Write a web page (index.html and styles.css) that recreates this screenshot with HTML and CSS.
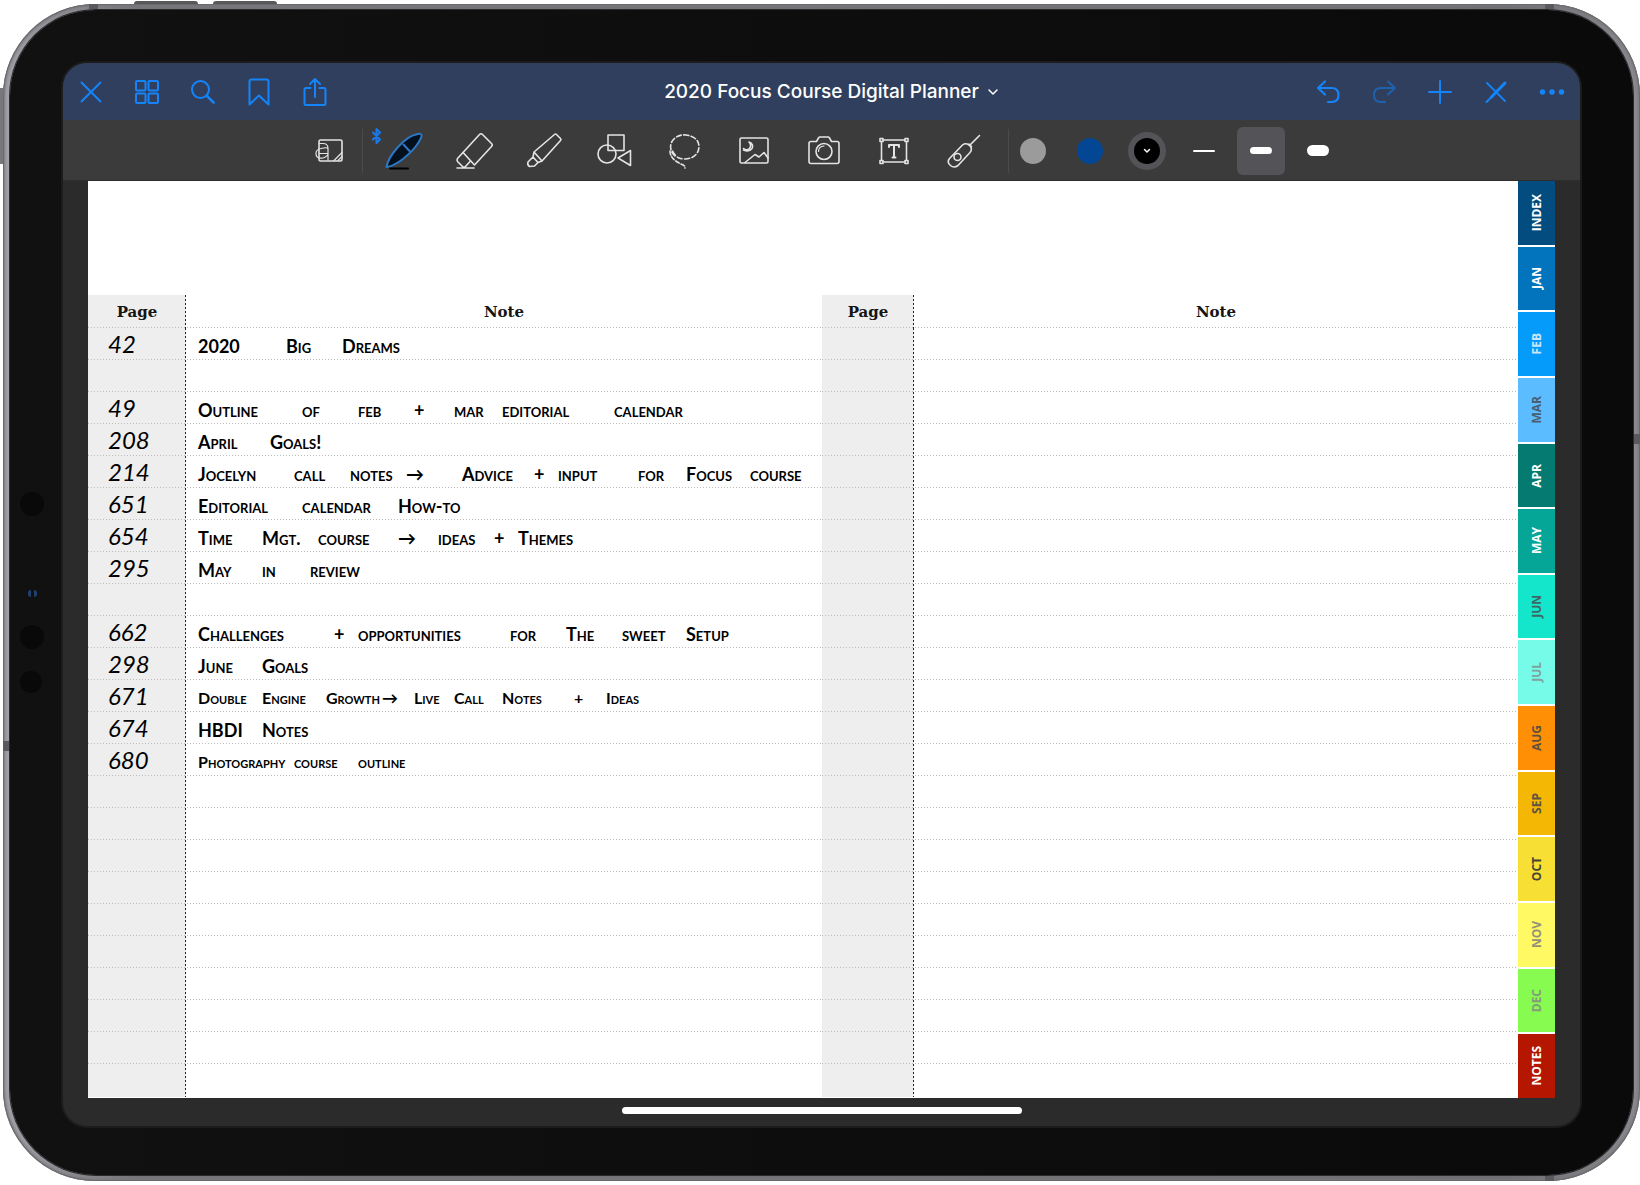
FILE: index.html
```html
<!DOCTYPE html>
<html lang="en">
<head>
<meta charset="utf-8">
<meta name="viewport" content="width=device-width, initial-scale=1">
<title>2020 Focus Course Digital Planner</title>
<link rel="stylesheet" href="styles.css">
</head>
<body>
<div class="device">
  <span class="key key-left"></span>
  <span class="key key-up"></span>
  <span class="key key-down"></span>
  <span class="band band-tl"></span>
  <span class="band band-tr"></span>
  <span class="band band-l"></span>
  <span class="band band-r"></span>
  <span class="band band-br"></span>
  <div class="bezel">
    <span class="lens lens-1"></span>
    <span class="glint"></span>
    <span class="lens lens-2"></span>
    <span class="lens lens-3"></span>
    <div class="screen">
      <header class="navbar">
        <div class="nav-group">
          <button class="nav-btn" aria-label="Close"><svg width="28" height="28" viewBox="0 0 28 28"><path d="M4.500 4.500l19 19M23.500 4.500l-19 19"/></svg></button>
          <button class="nav-btn" aria-label="Thumbnails"><svg width="28" height="28" viewBox="0 0 28 28"><rect x="3" y="3" width="9.500" height="9.500" rx="1"/><rect x="15.500" y="3" width="9.500" height="9.500" rx="1"/><rect x="3" y="15.500" width="9.500" height="9.500" rx="1"/><rect x="15.500" y="15.500" width="9.500" height="9.500" rx="1"/></svg></button>
          <button class="nav-btn" aria-label="Search"><svg width="28" height="28" viewBox="0 0 28 28"><circle cx="11.500" cy="11.500" r="8.500"/><path d="M17.700 17.700l7 7" stroke-width="2.600"/></svg></button>
          <button class="nav-btn" aria-label="Bookmark"><svg width="28" height="30" viewBox="0 0 28 30"><path d="M4.500 27.500V4.500q0-2 2-2h15q2 0 2 2v23L14 18.500z"/></svg></button>
          <button class="nav-btn" aria-label="Share"><svg width="28" height="30" viewBox="0 0 28 30"><path d="M9.500 11H5q-1.500 0-1.500 1.500v14q0 1.500 1.500 1.500h18q1.500 0 1.500-1.500v-14Q24.500 11 23 11h-4.500M14 20V2M9 7l5-5 5 5"/></svg></button>
        </div>
        <h1 class="title"><button class="title-btn">2020 Focus Course Digital Planner<svg class="chevron" width="10" height="8" viewBox="0 0 10 8"><path d="M1 2l4 4 4-4"/></svg></button></h1>
        <div class="nav-group nav-end">
          <button class="nav-btn" aria-label="Undo"><svg width="28" height="28" viewBox="0 0 28 28"><path d="M11 3.500L4 10l7 6.500M4 10h13.500q7 0 7 7t-7 7H14" stroke-width="2.200"/></svg></button>
          <button class="nav-btn dim" aria-label="Redo"><svg width="28" height="28" viewBox="0 0 28 28"><path d="M18 3.500L25 10l-7 6.500M25 10H11q-7 0-7 7t7 7h4"/></svg></button>
          <button class="nav-btn" aria-label="Add page"><svg width="28" height="28" viewBox="0 0 28 28"><path d="M14 3v22M3 14h22"/></svg></button>
          <button class="nav-btn" aria-label="Read-only mode"><svg width="28" height="28" viewBox="0 0 28 28"><path d="M5 5l18 18" stroke-width="1.800"/><path d="M23 5L9 19.500" stroke-width="3"/><path d="M7.500 21L4.500 24" stroke-width="2"/></svg></button>
          <button class="nav-btn" aria-label="More"><svg width="28" height="28" viewBox="0 0 28 28"><g class="solid"><circle cx="4.500" cy="14" r="2.700"/><circle cx="14" cy="14" r="2.700"/><circle cx="23.500" cy="14" r="2.700"/></g></svg></button>
        </div>
      </header>

      <div class="toolbar" role="toolbar" aria-label="Drawing tools">
        <button class="tool tool-zoom" aria-label="Zoom window"><svg width="30" height="24" viewBox="0 0 30 24"><rect x="5" y="1" width="23" height="21" rx="1.500"/><path d="M5.500 4.500H9q5 0 5 5V21M14 9.500Q13 8 7 9.500q-5 1-5 5T5.500 19q5 1 8.500-3.500M5.500 14.500H14M20 21.500l8-8M24 21.500l4-4" stroke-width="1.200"/></svg></button>
        <span class="rule"></span>
        <div class="tools">
          <button class="tool tool-pen" aria-label="Pen"><svg class="bluetooth" width="12" height="16" viewBox="0 0 12 16"><path d="M2 4.500l7 7-3.500 3.500V1L9 4.500l-7 7"/></svg><svg width="40" height="38" viewBox="0 0 40 38"><path class="nib" d="M2.500 35Q4 26 14 15T32 2.500q5-1.500 5.500.5.500 2-3 7.500Q30 18 19 27 9 34.500 2.500 35z"/><path class="nib" d="M19.500 12.500l6.500 7"/><path class="ink" d="M6 36.500h18"/></svg></button>
          <button class="tool" aria-label="Eraser"><svg width="40" height="38" viewBox="0 0 40 38"><path d="M9 20.500L25.500 2.500q1.500-1.500 3 0l9 9q1.500 1.500 0 3L20.500 33z"/><path d="M9 20.500l-5.500 6q-1 1.500 0 3l5 5q1.500 1.300 3 0l5-5.500M3 36h17"/></svg></button>
          <button class="tool" aria-label="Highlighter"><svg width="38" height="38" viewBox="0 0 38 38"><path d="M9 20L29.500 2.500q1-1 2 0l4 4q1 1 0 2L17 29zM9 20l-1 5 5 5.500 4-1.500M8 25l-5 5q-1 3 1.500 4.500L9.500 34l3.500-3.500"/></svg></button>
          <button class="tool" aria-label="Shapes"><svg width="38" height="38" viewBox="0 0 38 38"><rect x="13" y="3" width="16" height="15.500"/><circle cx="12" cy="22" r="9"/><path d="M35.500 18.500v15L23 26z"/></svg></button>
          <button class="tool" aria-label="Lasso"><svg width="38" height="38" viewBox="0 0 38 38"><path stroke-dasharray="5 2.500" d="M10 24Q3 17 7 9.500 12 2 21 3q13 2 13 12-1 11-14 12-6 0-9-3-4-4-3.500-7"/><path stroke-dasharray="4 2" d="M5 19q0 8 11 13 5 2 4 4"/></svg></button>
          <button class="tool" aria-label="Image"><svg width="34" height="34" viewBox="0 0 34 34"><rect x="3" y="4" width="28" height="25" rx="1.500"/><path d="M12 8q3 3 .5 6.500-3 2.500-6 0M12 8q5 2 3 6.500-3 4-8.500 1.500M8 28.500l10-8 4 2.500 5-4.500 4 5.500"/></svg></button>
          <button class="tool" aria-label="Camera"><svg width="34" height="34" viewBox="0 0 34 34"><path d="M4 7.500h5.500l2-3.500q.500-1 1.500-1h8q1 0 1.500 1l2 3.500H30q2 0 2 2v18q0 2-2 2H4q-2 0-2-2v-18q0-2 2-2z"/><circle cx="17" cy="17.500" r="8"/><path d="M11.500 17.500q0-5 5.500-5.500" stroke-width="1.200"/></svg></button>
          <button class="tool" aria-label="Text"><svg width="34" height="34" viewBox="0 0 34 34"><path d="M6 6h22M6 28h22M4.500 7.500v19M29.500 7.500v19"/><rect x="3" y="4.500" width="3" height="3"/><rect x="28" y="4.500" width="3" height="3"/><rect x="3" y="26.500" width="3" height="3"/><rect x="28" y="26.500" width="3" height="3"/><path d="M12 13v-2h10v2M17 11v12.500M15.500 23.500h3" stroke-width="2"/></svg></button>
          <button class="tool" aria-label="Laser pointer"><svg width="38" height="38" viewBox="0 0 38 38"><path d="M4.500 26.500L17.500 13q3-2.500 6.500 0l1.500 1.500q2 3-.500 6L13 33.500q-4 3-7.500 0-4-3.500-1-7zM25 13l9.500-9.500M24 12l2.500 2.500"/><circle cx="12.500" cy="25" r="3.500"/></svg></button>
        </div>
        <span class="rule"></span>
        <div class="presets">
          <button class="preset" aria-label="Grey"><span class="swatch grey"></span></button>
          <button class="preset" aria-label="Blue"><span class="swatch blue"></span></button>
          <button class="preset" aria-label="Black, selected"><span class="swatch black"><svg width="8" height="6" viewBox="0 0 8 6"><path d="M1.500 1.500L4 4l2.500-2.500"/></svg></span></button>
          <button class="preset" aria-label="Thin stroke"><span class="stroke thin"></span></button>
          <button class="preset selected" aria-label="Medium stroke"><span class="stroke medium"></span></button>
          <button class="preset" aria-label="Thick stroke"><span class="stroke thick"></span></button>
        </div>
      </div>

      <main class="paper">
        <div class="sheet">
          <table class="index left">
            <colgroup><col class="col-page"><col></colgroup>
            <thead><tr><th scope="col">Page</th><th scope="col">Note</th></tr></thead>
            <tbody>
              <tr><td>42</td><td><p><span class="u11">2020</span><span class="u7">Big</span><span>Dreams</span></p></td></tr>
              <tr><td></td><td></td></tr>
              <tr><td>49</td><td><p><span class="u13">Outline</span><span class="u7">of</span><span class="u7">feb</span><span class="u5">+</span><span class="u6">mar</span><span class="u14">editorial</span><span>calendar</span></p></td></tr>
              <tr><td>208</td><td><p><span class="u9">April</span><span>Goals!</span></p></td></tr>
              <tr><td>214</td><td><p><span class="u12">Jocelyn</span><span class="u7">call</span><span class="u7">notes</span><span class="u7">→</span><span class="u9">Advice</span><span class="u3">+</span><span class="u10">input</span><span class="u6">for</span><span class="u8">Focus</span><span>course</span></p></td></tr>
              <tr><td>651</td><td><p><span class="u13">Editorial</span><span class="u12">calendar</span><span>How-to</span></p></td></tr>
              <tr><td>654</td><td><p><span class="u8">Time</span><span class="u7">Mgt.</span><span class="u10">course</span><span class="u5">→</span><span class="u7">ideas</span><span class="u3">+</span><span>Themes</span></p></td></tr>
              <tr><td>295</td><td><p><span class="u8">May</span><span class="u6">in</span><span>review</span></p></td></tr>
              <tr><td></td><td></td></tr>
              <tr><td>662</td><td><p><span class="u17">Challenges</span><span class="u3">+</span><span class="u19">opportunities</span><span class="u7">for</span><span class="u7">The</span><span class="u8">sweet</span><span>Setup</span></p></td></tr>
              <tr><td>298</td><td><p><span class="u8">June</span><span>Goals</span></p></td></tr>
              <tr><td>671</td><td><p class="fine"><span class="u8">Double</span><span class="u8">Engine</span><span class="u7">Growth</span><span class="u4">→</span><span class="u5">Live</span><span class="u6">Call</span><span class="u9">Notes</span><span class="u4">+</span><span>Ideas</span></p></td></tr>
              <tr><td>674</td><td><p><span class="u8">HBDI</span><span>Notes</span></p></td></tr>
              <tr><td>680</td><td><p class="fine"><span class="u12">Photography</span><span class="u8">course</span><span>outline</span></p></td></tr>
              <tr><td></td><td></td></tr><tr><td></td><td></td></tr>
              <tr><td></td><td></td></tr><tr><td></td><td></td></tr>
              <tr><td></td><td></td></tr><tr><td></td><td></td></tr>
              <tr><td></td><td></td></tr><tr><td></td><td></td></tr>
              <tr><td></td><td></td></tr><tr><td></td><td></td></tr>
            </tbody>
          </table>
          <table class="index right">
            <colgroup><col class="col-page"><col></colgroup>
            <thead><tr><th scope="col">Page</th><th scope="col">Note</th></tr></thead>
            <tbody>
              <tr><td></td><td></td></tr><tr><td></td><td></td></tr>
              <tr><td></td><td></td></tr><tr><td></td><td></td></tr>
              <tr><td></td><td></td></tr><tr><td></td><td></td></tr>
              <tr><td></td><td></td></tr><tr><td></td><td></td></tr>
              <tr><td></td><td></td></tr><tr><td></td><td></td></tr>
              <tr><td></td><td></td></tr><tr><td></td><td></td></tr>
              <tr><td></td><td></td></tr><tr><td></td><td></td></tr>
              <tr><td></td><td></td></tr><tr><td></td><td></td></tr>
              <tr><td></td><td></td></tr><tr><td></td><td></td></tr>
              <tr><td></td><td></td></tr><tr><td></td><td></td></tr>
              <tr><td></td><td></td></tr><tr><td></td><td></td></tr>
              <tr><td></td><td></td></tr><tr><td></td><td></td></tr>
            </tbody>
          </table>
        </div>
        <nav class="tabs" aria-label="Planner sections">
          <a class="tab index-tab" href="#index"><span>INDEX</span></a>
          <a class="tab jan" href="#jan"><span>JAN</span></a>
          <a class="tab feb" href="#feb"><span>FEB</span></a>
          <a class="tab mar" href="#mar"><span>MAR</span></a>
          <a class="tab apr" href="#apr"><span>APR</span></a>
          <a class="tab may" href="#may"><span>MAY</span></a>
          <a class="tab jun" href="#jun"><span>JUN</span></a>
          <a class="tab jul" href="#jul"><span>JUL</span></a>
          <a class="tab aug" href="#aug"><span>AUG</span></a>
          <a class="tab sep" href="#sep"><span>SEP</span></a>
          <a class="tab oct" href="#oct"><span>OCT</span></a>
          <a class="tab nov" href="#nov"><span>NOV</span></a>
          <a class="tab dec" href="#dec"><span>DEC</span></a>
          <a class="tab notes" href="#notes"><span>NOTES</span></a>
        </nav>
      </main>
      <footer class="home"><span class="home-bar"></span></footer>
    </div>
  </div>
</div>
</body>
</html>
```
FILE: styles.css
```css
* { box-sizing: border-box; }

body {
  margin: 0;
  padding: 4px 0 4px 3px;
  background: #fff;
  font-family: Inter, "Liberation Sans", sans-serif;
}

button {
  display: flex;
  align-items: center;
  justify-content: center;
  margin: 0;
  padding: 0;
  border: 0;
  background: none;
  color: inherit;
  font: inherit;
  cursor: pointer;
}

svg {
  flex: none;
  fill: none;
  stroke: currentColor;
  stroke-width: 2;
  stroke-linecap: round;
  stroke-linejoin: round;
}

/* Tablet body */
.device {
  position: relative;
  display: flex;
  min-height: calc(100vh - 8px);
  padding: 6px 7px;
  border-radius: 92px;
  background: linear-gradient(90deg, #a2a2a8, #77777b 8%, #707073 92%, #8a8a90);
  box-shadow: inset 0 0 0 1px #6a6a6e, inset 0 0 3px 2px #77777b;
}

.bezel {
  position: relative;
  display: flex;
  flex: 1;
  min-width: 0;
  padding: 53px 53px 49px;
  border-radius: 86px;
  background: linear-gradient(90deg, #111, #0a0a0a);
  box-shadow: 0 0 0 1px #2a2a2d;
}

.key { position: absolute; background: #77777c; }
.key-left { left: -3px; top: 84px; width: 3px; height: 76px; }
.key-up { left: 131px; top: -3px; width: 64px; height: 3px; border-radius: 3px 3px 0 0; background: #58585b; }
.key-down { left: 210px; top: -3px; width: 64px; height: 3px; border-radius: 3px 3px 0 0; background: #58585b; }

.band { position: absolute; background: #5a5a5e; }
.band-tl { left: 86px; top: 0; width: 9px; height: 5px; }
.band-tr { right: 86px; top: 0; width: 9px; height: 5px; }
.band-l { left: 0; top: 737px; width: 6px; height: 10px; }
.band-r { right: 0; top: 430px; width: 6px; height: 10px; }
.band-br { right: 86px; bottom: 0; width: 9px; height: 5px; }

.lens {
  position: absolute;
  left: 10px;
  width: 24px;
  height: 24px;
  border-radius: 50%;
  background: #090909;
}
.lens-1 { top: 482px; }
.lens-2 { top: 615px; }
.lens-3 { top: 661px; width: 22px; height: 22px; }
.glint {
  position: absolute;
  left: 18px;
  top: 580px;
  width: 9px;
  height: 7px;
  border: solid #20406e;
  border-width: 0 3px;
  border-radius: 3px;
}

.screen {
  display: flex;
  flex: 1;
  flex-direction: column;
  min-width: 0;
  border-radius: 24px;
  background: #2b2b2b;
  box-shadow: 0 0 0 2px #1c1c1c;
  overflow: hidden;
}

/* Navigation bar */
.navbar {
  display: grid;
  grid-template-columns: 1fr auto 1fr;
  align-items: center;
  height: 57px;
  background: #303f5e;
  color: #1584f8;
}
.nav-group { display: flex; }
.nav-end { justify-content: flex-end; }
.nav-btn { width: 56px; height: 56px; }
.nav-btn.dim { color: #1f61ae; }
.solid { fill: currentColor; stroke: none; }

.title { margin: 0; font-size: 19px; font-weight: 500; line-height: 24px; }
.title-btn { gap: 9px; padding-left: 19px; color: #fff; white-space: nowrap; }
.chevron { stroke-width: 1.5; }

/* Tool bar */
.toolbar {
  display: flex;
  align-items: center;
  justify-content: center;
  height: 61px;
  padding: 1px 6px 0 0;
  border-bottom: 1px solid #2e2e2e;
  background: #3b3b3b;
  color: #e4e4e4;
}
.tools { display: flex; margin: 0 9px 0 6px; }
.tool { position: relative; width: 70px; height: 56px; }
.tool-zoom { width: 66px; }
.tool svg { stroke-width: 1.6; }
.rule { width: 1px; height: 44px; background: #4b4b4d; }
.tool .bluetooth { position: absolute; left: 2px; top: 5px; color: #1a78e8; stroke-width: 2; }
.nib { fill: #05101f; stroke: #2c78c4; stroke-width: 2; }
.ink { stroke: #000; stroke-width: 2; }

.presets { display: flex; gap: 9px; }
.preset { width: 48px; height: 48px; border-radius: 6px; }
.preset.selected { background: #545458; }
.swatch {
  display: flex;
  align-items: center;
  justify-content: center;
  width: 26px;
  height: 26px;
  border-radius: 50%;
}
.grey { background: #9b9b9b; }
.blue { background: #034694; }
.black { background: #000; box-shadow: 0 0 0 6px #545458; color: #fff; }
.black svg { stroke-width: 1.5; }
.stroke { width: 22px; border-radius: 6px; background: #fff; }
.thin { height: 2px; }
.medium { height: 7px; }
.thick { height: 11px; }

/* Planner spread */
.paper {
  display: flex;
  flex: 1;
  margin: 0 25px;
  background: #fff;
}
.sheet {
  display: flex;
  flex: 1;
  align-items: flex-start;
  min-width: 0;
  padding-top: 114px;
}

.index {
  table-layout: fixed;
  border-collapse: collapse;
  color: #151515;
}
.left { flex: 734; width: 734px; }
.right { flex: 696; width: 696px; }
.left .col-page { width: 98px; background: #eee; }
.right .col-page { width: 92px; background: #eee; }

.index tr {
  height: 32px;
  background: repeating-linear-gradient(90deg, #bcbcbc 0 1px, transparent 1px 3px) left bottom / 100% 1px no-repeat;
}
.index thead tr { height: 33px; }
.index tbody tr:last-child { height: 33px; background: none; }
.index th, .index td { padding: 0; }
.index th:first-child, .index td:first-child {
  background: repeating-linear-gradient(#222 0 2px, transparent 2px 4px) right top / 1px 100% no-repeat;
}
.index th {
  padding-top: 2px;
  font-family: "DejaVu Serif", serif;
  font-size: 15px;
  font-weight: 700;
  line-height: 31px;
}

/* Handwritten entries */
.index td { font-family: Lato, "Open Sans", sans-serif; line-height: 28px; color: #000; }
.index td:first-child { padding-left: 20px; font-size: 24px; font-style: italic; }
.index p {
  display: flex;
  margin: 0;
  padding: 4px 0 0 12px;
  font-size: 18px;
  font-weight: 700;
  font-variant-caps: small-caps;
  white-space: nowrap;
}
.index p.fine { font-size: 16px; }
.index p span { flex: none; }
.u3 { width: 24px; }
.u4 { width: 32px; }
.u5 { width: 40px; }
.u6 { width: 48px; }
.u7 { width: 56px; }
.u8 { width: 64px; }
.u9 { width: 72px; }
.u10 { width: 80px; }
.u11 { width: 88px; }
.u12 { width: 96px; }
.u13 { width: 104px; }
.u14 { width: 112px; }
.u17 { width: 136px; }
.u19 { width: 152px; }

/* Section tabs */
.tabs {
  display: flex;
  flex-direction: column;
  gap: 2px;
  width: 37px;
}
.tab {
  display: flex;
  flex: 1;
  align-items: center;
  justify-content: center;
  color: #fff;
  font-family: "Open Sans", "Noto Sans", sans-serif;
  font-size: 12px;
  font-weight: 700;
  text-decoration: none;
}
.tab span { writing-mode: vertical-rl; transform: rotate(180deg); }
.index-tab { background: #034c80; }
.jan { background: #0274bd; }
.feb { background: #059bfb; color: #c9e6fb; }
.mar { background: #5bbcff; color: #4b5f70; }
.apr { background: #047a70; }
.may { background: #05a597; }
.jun { background: #14e6cb; color: #3f6662; }
.jul { background: #76fbe8; color: #7fa39e; }
.aug { background: #ff9005; color: #5e5040; }
.sep { background: #f4b704; color: #5c553f; }
.oct { background: #f8df34; color: #454333; }
.nov { background: #fffa64; color: #929078; }
.dec { background: #88fb50; color: #839c7a; }
.notes { background: #b51600; }

.home {
  display: flex;
  align-items: center;
  justify-content: center;
  height: 28px;
  padding-bottom: 3px;
}
.home-bar { width: 400px; max-width: 60%; height: 7px; border-radius: 4px; background: #fff; }
```
